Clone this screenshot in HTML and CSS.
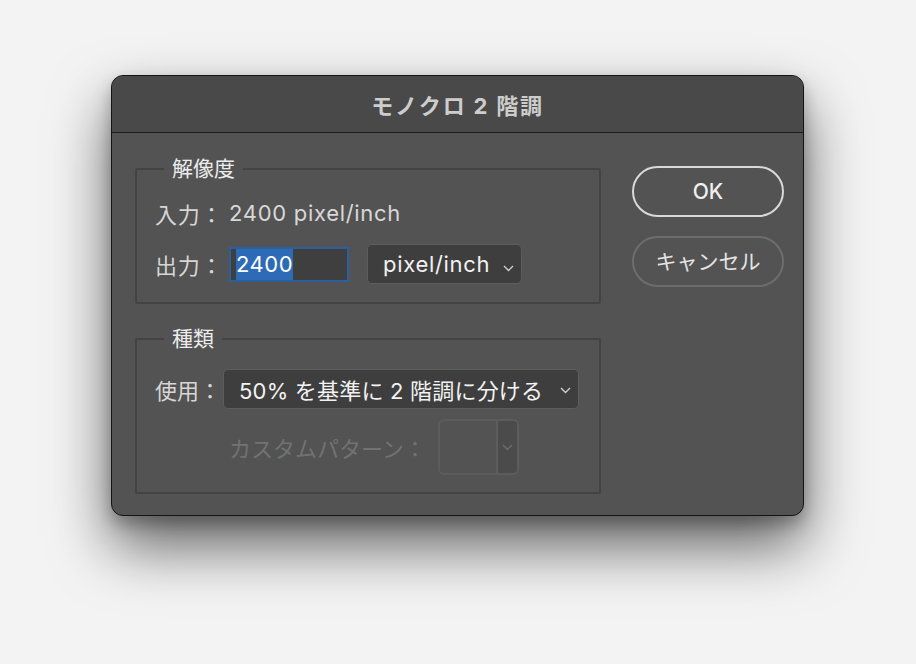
FILE: index.html
```html
<!DOCTYPE html>
<html lang="ja">
<head>
<meta charset="utf-8">
<title>モノクロ 2 階調</title>
<link rel="stylesheet" href="styles.css">
</head>
<body>
<div class="stage">
  <div class="window">
    <div class="titlebar">モノクロ 2 階調</div>
    <div class="content">
      <div class="groups">
        <fieldset class="group g1">
          <legend>解像度</legend>
          <div class="row r-in">
            <span class="label">入力：</span><span class="value">2400 pixel/inch</span>
          </div>
          <div class="row r-out">
            <span class="label">出力：</span>
            <div class="field"><span class="selected">2400</span></div>
            <div class="select s-unit"><span>pixel/inch</span><svg class="chev" width="11" height="7" viewBox="0 0 11 7"><polyline points="1,1 5.5,5.5 10,1" fill="none" stroke="#cfcfcf" stroke-width="1.4"/></svg></div>
          </div>
        </fieldset>
        <fieldset class="group g2">
          <legend>種類</legend>
          <div class="row r-use">
            <span class="label l-use">使用：</span>
            <div class="select s-method"><span>50% を基準に 2 階調に分ける</span><svg class="chev" width="11" height="7" viewBox="0 0 11 7"><polyline points="1,1 5.5,5.5 10,1" fill="none" stroke="#cfcfcf" stroke-width="1.4"/></svg></div>
          </div>
          <div class="row r-pattern">
            <span class="label dis">カスタムパターン：</span>
            <div class="pattern">
              <div class="swatch"></div>
              <div class="drop"><svg width="11" height="7" viewBox="0 0 11 7"><polyline points="1,1 5.5,5.5 10,1" fill="none" stroke="#6c6c6c" stroke-width="1.4"/></svg></div>
            </div>
          </div>
        </fieldset>
      </div>
      <div class="buttons">
        <div class="btn ok">OK</div>
        <div class="btn cancel">キャンセル</div>
      </div>
    </div>
  </div>
</div>
</body>
</html>
```

FILE: styles.css
```css
html, body {
  margin: 0;
  height: 664px;
  overflow: hidden;
}
body {
  background: #f3f3f3;
  font-family: "Inter", "Noto Sans CJK JP", sans-serif;
}
.stage {
  display: flex;
  padding: 75px 0 0 111px;
}
.window {
  width: 693px;
  height: 441px;
  box-sizing: border-box;
  border: 1px solid #141414;
  border-radius: 12px;
  background: #535353;
  overflow: hidden;
  box-shadow: 0 30px 60px rgba(0, 0, 0, 0.6), 0 8px 16px rgba(0, 0, 0, 0.25);
}
.titlebar {
  height: 56px;
  border-bottom: 1px solid #1e1e1e;
  background: #494949;
  display: flex;
  align-items: center;
  justify-content: center;
  font-size: 22px;
  font-weight: 700;
  letter-spacing: 1.8px;
  color: #cdcdcd;
}
.content {
  display: flex;
  padding: 24px 19px 0 23px;
  gap: 31px;
}
.groups {
  width: 466px;
  display: flex;
  flex-direction: column;
  gap: 23px;
}
.group {
  margin: 0;
  min-width: 0;
  border: 2px solid #434343;
  border-radius: 2px;
  padding: 14px 0 18px 18px;
  display: flex;
  flex-direction: column;
  gap: 13px;
}
.group legend {
  font-size: 21px;
  line-height: 24px;
  padding: 0 8px;
  margin-left: 9px;
  color: #ececec;
}
.g2 {
  padding-top: 18px;
  padding-bottom: 17px;
  gap: 10px;
}
.row {
  display: flex;
  align-items: center;
  font-size: 22px;
  letter-spacing: 0.7px;
  color: #d6d6d6;
  white-space: nowrap;
}
.r-in {
  height: 36px;
}
.label {
  width: 74px;
  flex: none;
}
.l-use {
  width: 68px;
  letter-spacing: 0;
}
.value {
  color: #d8d8d8;
}
.field {
  width: 120px;
  height: 35px;
  box-sizing: border-box;
  border: 2px solid #2b5f9e;
  background: #3f3f3f;
  padding: 0 0 0 5px;
  margin-right: 18px;
  display: flex;
  align-items: stretch;
  flex: none;
}
.selected {
  background: #2d6bb6;
  color: #ffffff;
  line-height: 31px;
  letter-spacing: 0.5px;
}
.select {
  height: 40px;
  box-sizing: border-box;
  border: 1px solid #5d5d5d;
  border-radius: 5px;
  background: #3e3e3e;
  color: #f2f2f2;
  display: flex;
  align-items: center;
  justify-content: space-between;
  padding: 0 7px 0 15px;
  flex: none;
}
.s-unit {
  width: 155px;
}
.s-unit .chev {
  margin-top: 8px;
}
.s-method {
  width: 356px;
  letter-spacing: 0.2px;
}
.s-method .chev {
  margin-top: 2px;
}
.r-pattern .label {
  margin-left: 74px;
  width: 209px;
  letter-spacing: 0;
}
.dis {
  color: #727272;
}
.pattern {
  width: 81px;
  height: 56px;
  box-sizing: border-box;
  border: 2px solid #5c5c5c;
  border-radius: 6px;
  display: flex;
  overflow: hidden;
  flex: none;
}
.swatch {
  width: 56px;
  border-right: 2px solid #5c5c5c;
}
.drop {
  flex: 1;
  background: #4b4b4b;
  display: flex;
  align-items: center;
  justify-content: center;
}
.buttons {
  width: 152px;
  margin-top: 9px;
  display: flex;
  flex-direction: column;
  gap: 19px;
}
.btn {
  height: 51px;
  box-sizing: border-box;
  border-radius: 26px;
  display: flex;
  align-items: center;
  justify-content: center;
  font-size: 21px;
  color: #eeeeee;
}
.ok {
  border: 2px solid #d9d9d9;
  font-weight: 500;
}
.cancel {
  border: 2px solid #6d6d6d;
  color: #e4e4e4;
  padding-bottom: 4px;
}
```
